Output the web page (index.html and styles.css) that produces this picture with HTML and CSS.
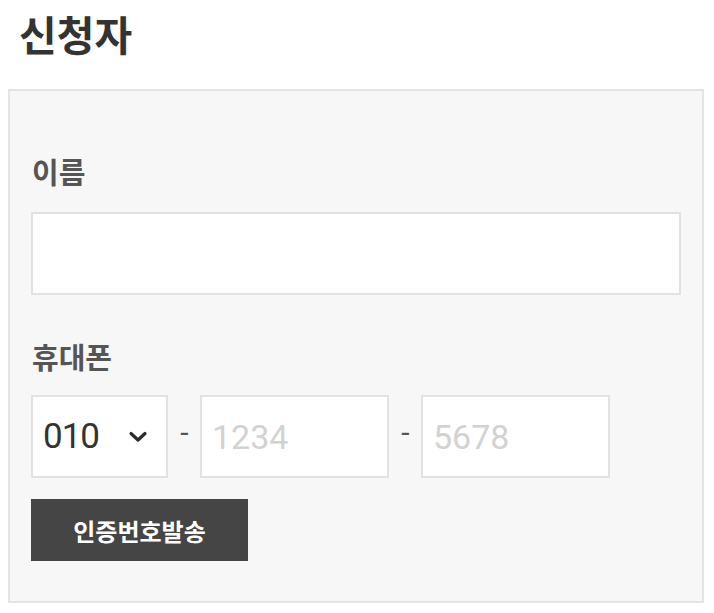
FILE: index.html
```html
<!DOCTYPE html>
<html lang="ko">
<head>
<meta charset="utf-8">
<title>신청자</title>
<link rel="stylesheet" href="styles.css">
</head>
<body>
<h2 class="title">신청자</h2>
<section class="panel">
  <label class="label" for="name">이름</label>
  <input id="name" class="field field-full" type="text">
  <label class="label label-phone" for="phone2">휴대폰</label>
  <div class="phone-row">
    <div class="select-wrap">
      <select class="select" aria-label="통신사 번호">
        <option>010</option>
        <option>011</option>
        <option>016</option>
      </select>
      <svg class="chevron" viewBox="0 0 20 12" width="20" height="12" aria-hidden="true">
        <path d="M3 2.5 L10 9 L17 2.5" fill="none" stroke="#2b2b2b" stroke-width="3.2" stroke-linecap="round" stroke-linejoin="round"/>
      </svg>
    </div>
    <span class="dash">-</span>
    <input id="phone2" class="field field-part" type="text" placeholder="1234">
    <span class="dash">-</span>
    <input class="field field-part" type="text" placeholder="5678" aria-label="끝자리">
  </div>
  <button class="send-btn" type="button">인증번호발송</button>
</section>
</body>
</html>
```
FILE: styles.css
```css
* { box-sizing: border-box; }
html, body { margin: 0; padding: 0; background: #fff; }
body {
  padding: 0 10px 0 8px;
  font-family: "Noto Sans CJK KR", "Noto Sans", sans-serif;
  color: #333;
}
.title {
  margin: 9px 0 32px 11px;
  font-size: 41px;
  line-height: 48px;
  font-weight: 700;
  color: #333;
}
.panel {
  width: 696px;
  background: #f7f7f7;
  border: 2px solid #e4e4e4;
  padding: 60px 21px 40px 21px;
  display: flex;
  flex-direction: column;
  align-items: flex-start;
}
.label {
  display: block;
  font-size: 29px;
  line-height: 40px;
  font-weight: 700;
  color: #555;
  margin-left: 1px;
}
.label-phone { margin-top: 41px; }
.field {
  display: block;
  height: 83px;
  background: #fff;
  border: 2px solid #e2e2e2;
  border-radius: 0;
  outline: none;
  font-family: Roboto, "Noto Sans", sans-serif;
  font-size: 34px;
  color: #333;
  padding: 0 10px;
}
.field::placeholder { color: #d2d2d2; }
.field-full {
  width: 650px;
  margin-top: 21px;
}
.phone-row {
  margin-top: 19px;
  display: flex;
  align-items: center;
}
.select-wrap {
  position: relative;
  width: 137px;
  height: 83px;
}
.select {
  width: 100%;
  height: 100%;
  appearance: none;
  -webkit-appearance: none;
  background: #fff;
  border: 2px solid #e2e2e2;
  border-radius: 0;
  font-family: Roboto, "Noto Sans", sans-serif;
  font-size: 35px;
  letter-spacing: -1px;
  color: #333;
  padding: 0 0 0 10px;
  outline: none;
}
.chevron {
  position: absolute;
  right: 20px;
  top: 36px;
  pointer-events: none;
}
.dash {
  width: 9px;
  margin: 0 11px 0 12px;
  font-family: Roboto, sans-serif;
  font-size: 30px;
  color: #555;
  text-align: center;
  line-height: 1;
  position: relative;
  top: -4px;
}
.field-part { width: 189px; }
.send-btn {
  margin-top: 21px;
  width: 217px;
  height: 62px;
  background: #454545;
  border: 0;
  border-radius: 0;
  color: #fff;
  font-family: "Noto Sans CJK KR", sans-serif;
  font-size: 24px;
  font-weight: 700;
  cursor: pointer;
}
```
